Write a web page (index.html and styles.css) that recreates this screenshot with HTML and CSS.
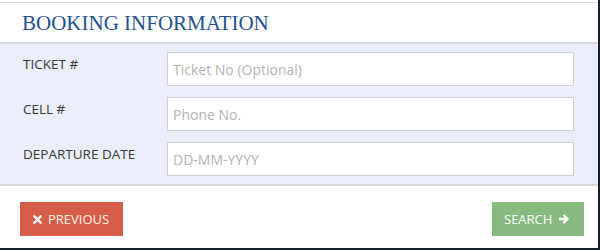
FILE: index.html
```html
<!DOCTYPE html>
<html lang="en">
<head>
    <meta charset="UTF-8">
    <meta name="viewport" content="width=device-width, initial-scale=1.0">
    <title>Booking Information</title>
    <link rel="stylesheet" href="styles.css">
</head>
<body>
    <div class="booking-panel">
        <div class="panel-header">
            <h2>BOOKING INFORMATION</h2>
        </div>
        <div class="panel-body">
            <div class="form-row">
                <label for="ticketInput">TICKET #</label>
                <input type="text" id="ticketInput" placeholder="Ticket No (Optional)" />
            </div>
            <div class="form-row">
                <label for="cellInput">CELL #</label>
                <input type="text" id="cellInput" placeholder="Phone No." />
            </div>
            <div class="form-row">
                <label for="dateInput">DEPARTURE DATE</label>
                <input type="text" id="dateInput" placeholder="DD-MM-YYYY" />
            </div>
        </div>
        <div class="panel-footer">
            <button class="btn btn-previous">
                <svg class="icon" viewBox="0 0 10 10" width="9" height="9"><path d="M1.5 1.5 L8.5 8.5 M8.5 1.5 L1.5 8.5" stroke="#fff" stroke-width="2.6" stroke-linecap="round"/></svg>
                PREVIOUS
            </button>
            <button class="btn btn-search">
                SEARCH
                <svg class="icon" viewBox="0 0 12 12" width="12" height="12"><path d="M6.2 1 L11 6 L6.2 11 L4.6 9.4 L6.8 7.3 H1 V4.7 H6.8 L4.6 2.6 Z" fill="#fff"/></svg>
            </button>
        </div>
    </div>
</body>
</html>
```
FILE: styles.css
```css
body {
    margin: 0;
    padding: 0;
    background-color: #16212b;
    font-family: "Open Sans", Arial, sans-serif;
}
.booking-panel {
    width: 598px;
    height: 248px;
    padding-top: 2px;
    box-sizing: border-box;
    background-color: #fff;
}
.panel-header {
    height: 39px;
    border-top: 1px solid #dcdcdc;
    border-bottom: 2px solid #d8dbe0;
    display: flex;
    align-items: center;
    padding-left: 22px;
}
.panel-header h2 {
    margin: 0;
    font-family: "Liberation Serif", "Times New Roman", serif;
    font-weight: normal;
    font-size: 21px;
    color: #24528f;
    padding-top: 1px;
}
.panel-body {
    background-color: #e9eef8;
    padding: 8px 23px 8px 23px;
    border-bottom: 2px solid #d6d9de;
    display: flex;
    flex-direction: column;
    gap: 11px;
}
.form-row {
    display: flex;
    align-items: flex-start;
}
.form-row label {
    width: 144px;
    padding-top: 3px;
    font-size: 13.5px;
    color: #383838;
}
.form-row input {
    width: 407px;
    height: 34px;
    box-sizing: border-box;
    border: 1px solid #cfd3d8;
    padding: 0 5px;
    font-family: "Open Sans", Arial, sans-serif;
    font-size: 14px;
    color: #555;
    background-color: #fff;
    outline: none;
}
.form-row input::placeholder {
    color: #b3b3b3;
}
.panel-footer {
    display: flex;
    justify-content: space-between;
    padding: 16px 14px 0 20px;
}
.btn {
    height: 34px;
    border: none;
    color: #fff;
    font-family: "Open Sans", Arial, sans-serif;
    font-size: 13px;
    display: flex;
    align-items: center;
    gap: 6px;
    cursor: pointer;
}
.btn-previous {
    width: 103px;
    padding: 0 0 0 13px;
    background-color: #d65d48;
    color: #fdf3e6;
}
.btn-search {
    width: 92px;
    padding: 0 0 0 12px;
    background-color: #86ba7f;
}
```
